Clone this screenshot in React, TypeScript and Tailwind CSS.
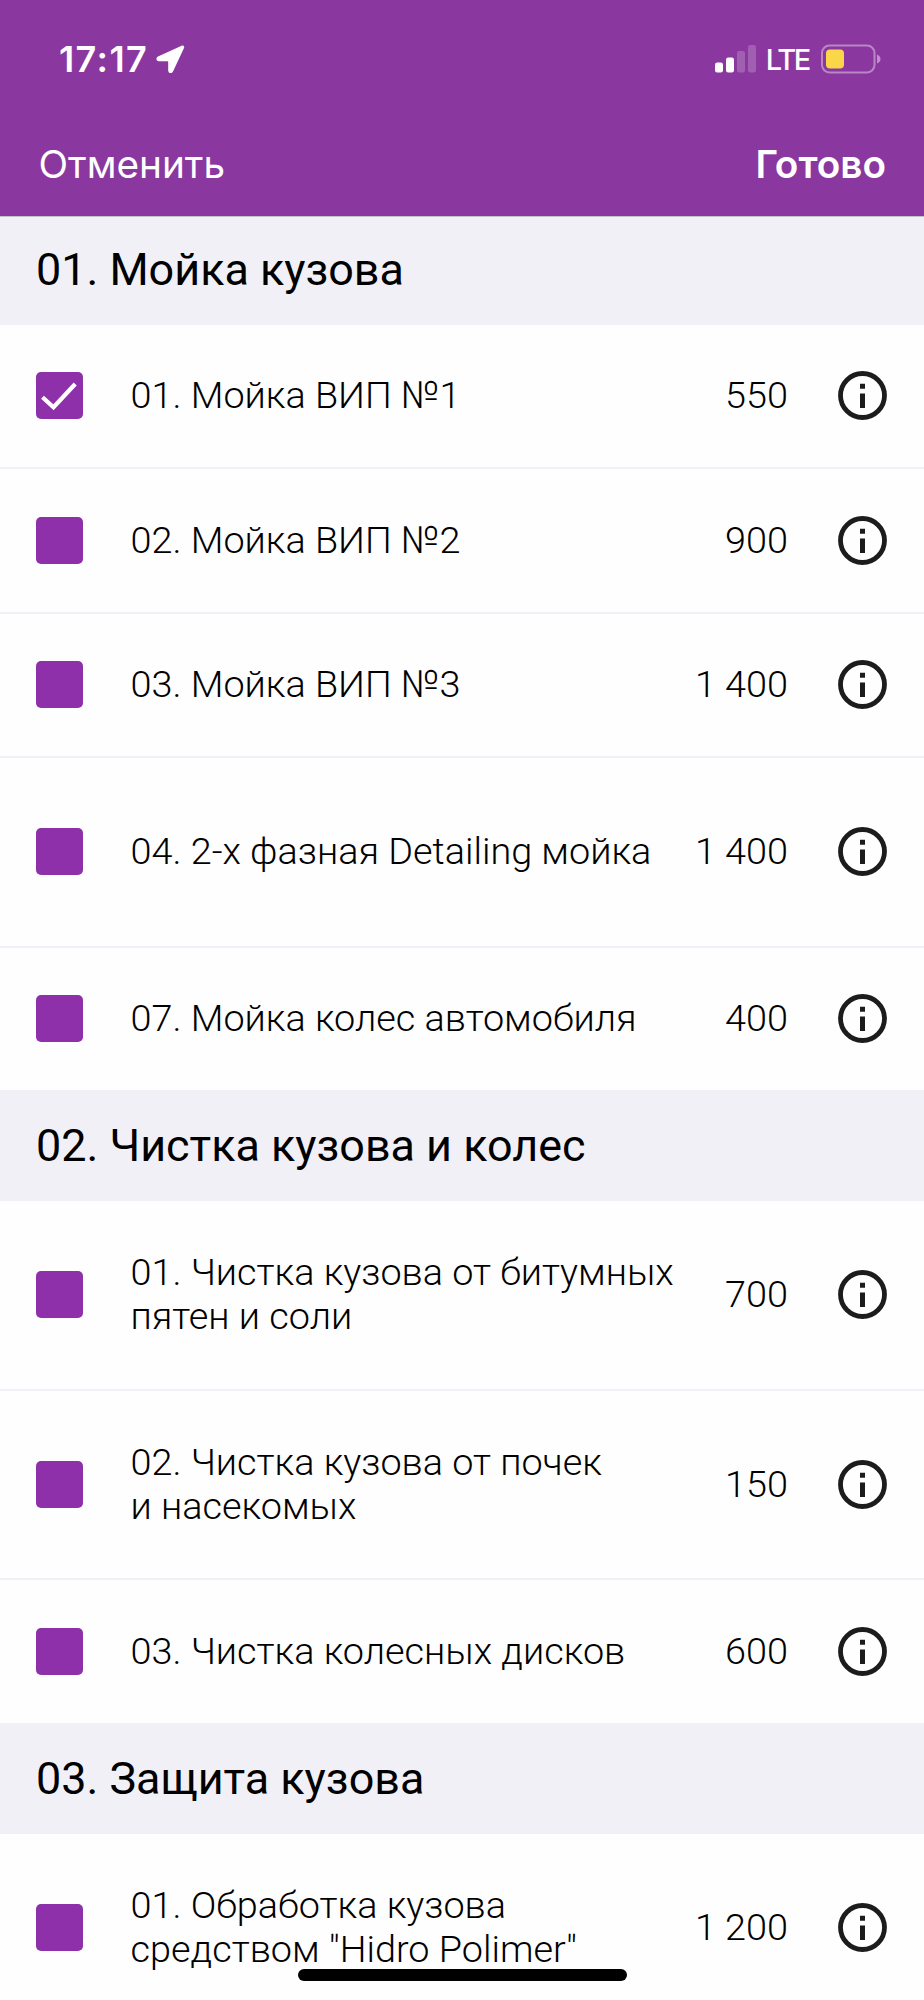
import React from 'react';

type Service = {
  title: string[];
  price: string;
  height: string;
  checked?: boolean;
};

type Section = {
  title: string;
  height: string;
  services: Service[];
};

const sections: Section[] = [
  {
    title: '01. Мойка кузова',
    height: 'h-[107.5px] pb-[2px]',
    services: [
      { title: ['01. Мойка ВИП №1'], price: '550', height: 'h-[144.5px]', checked: true },
      { title: ['02. Мойка ВИП №2'], price: '900', height: 'h-[144.5px]' },
      { title: ['03. Мойка ВИП №3'], price: '1 400', height: 'h-[144.5px]' },
      { title: ['04. 2-х фазная Detailing мойка'], price: '1 400', height: 'h-[189.5px]' },
      { title: ['07. Мойка колес автомобиля'], price: '400', height: 'h-[142.5px]' }
    ]
  },
  {
    title: '02. Чистка кузова и колес',
    height: 'h-[111px]',
    services: [
      { title: ['01. Чистка кузова от битумных', 'пятен и соли'], price: '700', height: 'h-[189.5px]' },
      { title: ['02. Чистка кузова от почек', 'и насекомых'], price: '150', height: 'h-[189.5px]' },
      { title: ['03. Чистка колесных дисков'], price: '600', height: 'h-[143px]' }
    ]
  },
  {
    title: '03. Защита кузова',
    height: 'h-[111px]',
    services: [
      { title: ['01. Обработка кузова', 'средством "Hidro Polimer"'], price: '1 200', height: 'h-[187px]' }
    ]
  }
];

function StatusBar() {
  return (
    <div className="flex h-[118px] items-center justify-between pl-[59px] pr-[43px] text-white">
      <div className="flex items-center gap-2">
        <span className="text-[36px] font-semibold leading-none tracking-[1.4px]">17:17</span>
        <svg className="h-[29px] w-[29px]" viewBox="0 0 29 29" fill="currentColor">
          <path d="M25.6 .8 2 11.6c-2.400 1.200-1.900 4.600.8 4.600h8.800c.4 0 .6.2.6.6v8.700c0 2.900 3.500 3.500 4.800 1L28 3c.7-1.600-.8-2.900-2.400-2.200z" />
        </svg>
      </div>
      <div className="flex items-center">
        <svg className="h-[28px] w-[42px]" viewBox="0 0 42 28" fill="currentColor">
          <rect x="0" y="17.5" width="8" height="10" rx="2.2" />
          <rect x="11" y="12.5" width="8" height="15" rx="2.2" />
          <rect x="22" y="6" width="8" height="21.5" rx="2.2" opacity=".2" />
          <rect x="33" y="0" width="8" height="27.5" rx="2.2" opacity=".2" />
        </svg>
        <span className="ml-[9px] mr-[12px] text-[29px] font-medium leading-none tracking-[-2.3px]">LTE</span>
        <svg className="h-[30px] w-[60px]" viewBox="0 0 60 30">
          <rect x="1" y="1.5" width="52.5" height="27" rx="7.5" fill="none" stroke="white" strokeOpacity=".4" strokeWidth="2" />
          <rect x="5" y="5.5" width="18" height="19" rx="4" fill="#f9d749" />
          <path d="M56 10.5v9c2-.8 3.500-2.500 3.500-4.500s-1.500-3.700-3.500-4.500z" fill="white" fillOpacity=".45" />
        </svg>
      </div>
    </div>
  );
}

function Checkbox({ checked }: { checked?: boolean }) {
  return (
    <div className="h-[47px] w-[47px] shrink-0 rounded-[5px] bg-[#8e30a9]">
      {checked && (
        <svg viewBox="0 0 47 47" fill="none" stroke="white" strokeWidth="4.2">
          <path d="M6.5 25.2 17.5 35.2 39.2 12" />
        </svg>
      )}
    </div>
  );
}

function InfoIcon() {
  return (
    <svg className="h-[49px] w-[49px] shrink-0" viewBox="0 0 49 49">
      <circle cx="24.5" cy="24.5" r="22" fill="none" stroke="#1c1c1c" strokeWidth="4.8" />
      <path d="M22 12.7h5v5h-5zM22 22.5h5v14.500h-5z" fill="#1c1c1c" />
    </svg>
  );
}

export default function App() {
  return (
    <div className="h-[2000px] w-[924px] overflow-hidden bg-[#fefefe] font-[Roboto,sans-serif] text-black">
      <header className="h-[217px] border-b border-[#c6c0cc] bg-[#8a389f] font-[Inter,sans-serif]">
        <StatusBar />
        <nav className="flex h-[92px] items-center justify-between px-[38px] text-[38.7px] text-white">
          <button className="ml-[0.5px]">Отменить</button>
          <button className="font-semibold">Готово</button>
        </nav>
      </header>

      {sections.map((section) => (
        <section key={section.title}>
          <h2 className={`flex items-center bg-[#f1f0f6] pl-[36px] text-[44.9px] ${section.height}`}>
            {section.title}
          </h2>
          <ul className="divide-y-2 divide-[#f1f0f6]">
            {section.services.map((service) => (
              <li
                key={service.title[0]}
                className={`flex items-center pl-[36px] pr-[37px] text-[37.8px] font-[280] leading-[44px] ${service.height}`}
              >
                <Checkbox checked={service.checked} />
                <p className="ml-[47.5px] flex-1 whitespace-nowrap pb-[1px]">
                  {service.title.map((line) => (
                    <span key={line} className="block">{line}</span>
                  ))}
                </p>
                <span className="mr-[50px] whitespace-nowrap pb-[1px]">{service.price}</span>
                <InfoIcon />
              </li>
            ))}
          </ul>
        </section>
      ))}

      {/* home indicator */}
      <div className="absolute left-[298px] top-[1969px] h-[12px] w-[329px] rounded-full bg-black" />
    </div>
  );
}
